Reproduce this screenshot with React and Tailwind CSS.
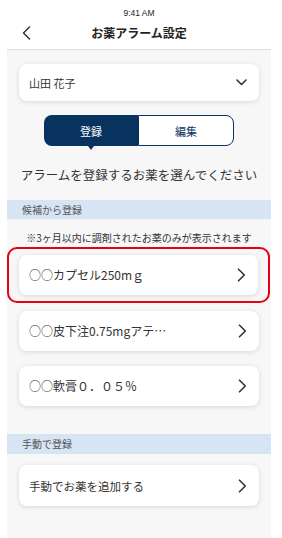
import React from "react";

const font = { fontFamily: '"Noto Sans CJK JP", "Noto Sans", sans-serif' };

function ChevronRight() {
  return (
    <svg width="9" height="14" viewBox="0 0 9 14" fill="none">
      <path d="M1.5 1.2 L7.3 7 L1.5 12.8" stroke="#333" strokeWidth="1.6" strokeLinecap="round" strokeLinejoin="round" />
    </svg>
  );
}

function Card({ children }) {
  return (
    <div className="h-[40px] rounded-[8px] bg-white shadow-[0_1px_5px_rgba(0,0,0,0.13)] flex items-center justify-between pl-[10px] pr-[12px]">
      <span className="text-[12px] leading-[16px] text-[#333]">{children}</span>
      <ChevronRight />
    </div>
  );
}

export default function App() {
  return (
    <div className="w-[282px] h-[538px] bg-white overflow-hidden" style={font}>
      <div className="ml-[7px] w-[264px] h-[538px] bg-[#f7f7f7] flex flex-col">
        {/* header */}
        <div className="bg-white border-b border-[#dcdcdc] pb-[5px]">
          <div className="h-[22px] flex items-center justify-center pt-[4px]">
            <span className="text-[8.5px] leading-[10px] text-[#222]" style={{ fontFamily: '"Liberation Sans", Arial, sans-serif' }}>9:41 AM</span>
          </div>
          <div className="relative h-[22px] flex items-center justify-center">
            <svg className="absolute left-[14px] top-[4px]" width="11" height="14" viewBox="0 0 11 14" fill="none">
              <path d="M8.5 1 L2.5 7 L8.5 13" stroke="#333" strokeWidth="1.5" strokeLinecap="round" strokeLinejoin="round" />
            </svg>
            <span className="text-[12px] leading-[16px] font-bold text-[#222]">お薬アラーム設定</span>
          </div>
        </div>

        {/* dropdown */}
        <div className="mx-[12px] mt-[14px] h-[37px] rounded-[8px] bg-white shadow-[0_1px_5px_rgba(0,0,0,0.12)] flex items-center justify-between pl-[10px] pr-[12px]">
          <span className="text-[11px] leading-[14px] text-[#333]">山田 花子</span>
          <svg width="11" height="7" viewBox="0 0 11 7" fill="none">
            <path d="M1 1 L5.5 5.5 L10 1" stroke="#333" strokeWidth="1.6" strokeLinecap="round" strokeLinejoin="round" />
          </svg>
        </div>

        {/* segment */}
        <div className="mt-[14px] flex justify-center">
          <div className="flex w-[190px] h-[31px]">
            <div className="relative flex-1 bg-[#08335f] rounded-l-[8px] flex items-center justify-center">
              <span className="text-[11px] leading-[14px] text-white">登録</span>
              <div className="absolute left-1/2 -translate-x-1/2 top-full w-0 h-0 border-l-[3.5px] border-r-[3.5px] border-t-[4px] border-l-transparent border-r-transparent border-t-[#08335f]" />
            </div>
            <div className="flex-1 bg-white border border-[#08335f] rounded-r-[8px] flex items-center justify-center">
              <span className="text-[11px] leading-[14px] text-[#08335f]">編集</span>
            </div>
          </div>
        </div>

        <div className="mt-[20px] mb-[16px] text-center text-[12.5px] leading-[18px] text-[#333]">
          アラームを登録するお薬を選んでください
        </div>

        {/* section 1 */}
        <div className="h-[19px] bg-[#d7e4f4] flex items-center pl-[15px]">
          <span className="text-[10px] leading-[12px] text-[#555]">候補から登録</span>
        </div>
        <div className="pt-[12px] mb-[3px] text-center text-[10px] leading-[13px] text-[#333]">
          ※3ヶ月以内に調剤されたお薬のみが表示されます
        </div>

        <div className="mr-[1px] rounded-[10px] border-2 border-[#e60012] px-[10px] py-[6px]">
          <Card>○○カプセル250mｇ</Card>
        </div>

        <div className="mx-[12px] mt-[8px] flex flex-col gap-[14px]">
          <div className="h-[41px] flex flex-col"><div className="flex-1"><Card>○○皮下注0.75mgアテ…</Card></div></div>
          <Card>○○軟膏０．０５％</Card>
        </div>

        {/* section 2 */}
        <div className="mt-[28px] h-[20px] bg-[#d7e4f4] flex items-center pl-[15px]">
          <span className="text-[10px] leading-[12px] text-[#555]">手動で登録</span>
        </div>
        <div className="mx-[12px] mt-[11px]">
          <div className="h-[41px] rounded-[8px] bg-white shadow-[0_1px_5px_rgba(0,0,0,0.13)] flex items-center justify-between pl-[10px] pr-[12px]">
            <span className="text-[11.5px] leading-[16px] text-[#333]">手動でお薬を追加する</span>
            <ChevronRight />
          </div>
        </div>
      </div>
    </div>
  );
}
